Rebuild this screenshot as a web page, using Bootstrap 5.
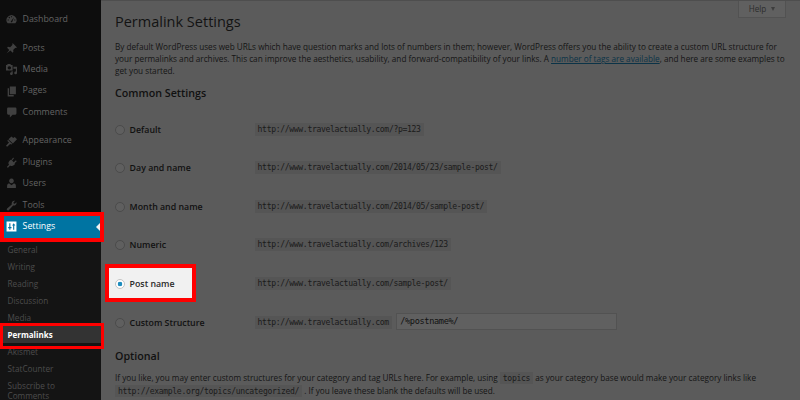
<!DOCTYPE html>
<html lang="en">
<head>
<meta charset="utf-8">
<title>Permalink Settings</title>
<link href="https://cdn.jsdelivr.net/npm/bootstrap@5.3.0/dist/css/bootstrap.min.css" rel="stylesheet">
<style>
body{width:800px;height:400px;overflow:hidden;background:#5b5b5b;color:#151515;font:8.2px/12.1px "Open Sans",sans-serif}
.side{width:101px;height:400px;background:#0d0d0d;padding-top:9px;flex:none;overflow:hidden}
.item{height:21.45px;padding-left:6px;gap:5.6px;color:#646464;font-size:8.8px;line-height:21.45px;white-space:nowrap;text-decoration:none}
.item svg{width:11px;height:11px;fill:#404040;flex:none}
.gap-sep{height:7.1px}
.item.on{background:#0074a2;color:#fff;position:relative}
.item.on svg{fill:#fff}
.item.on::after{content:"";position:absolute;right:0;top:5.7px;border:5px solid transparent;border-right-color:#f1f1f1;border-left:0}
.sub{background:#141414;height:164px;padding-top:3.6px}
.sub .sub-item{display:block;color:#4c4c4c;font-size:8.2px;line-height:17.05px;height:17.05px;padding-left:7.5px;text-decoration:none}
.sub .cur{background:#333;color:#fff;font-weight:700;font-size:8px}
.sub .two{line-height:9.8px;padding-top:3.6px}
.main{padding-left:14px;border-top:1px solid #4e4e4e;width:699px;height:400px}
h1{font-size:14.5px;line-height:20px;margin:11px 0 0;font-weight:400;color:#131313}
h2{font-size:10.7px;line-height:14px;margin:8.7px 0 0;font-weight:600;color:#111}
.intro{margin:9.2px 0 0;white-space:nowrap}
.intro a{color:#0b3347}
code{font:8.1px/11px "DejaVu Sans Mono",monospace;letter-spacing:-.345px;color:#1b1b1b;background:#555;padding:1px 3px}
.opts{padding-top:10.2px}
.opt{height:38.6px}
.opt code{margin-top:-1.2px}
.opt label{width:139.6px;font-size:8.8px;font-weight:600;color:#111;gap:4.6px}
.radio{width:10px;height:10px;border:1px solid #4b4b4b;border-radius:50%;background:#5f5f5f;flex:none}
.opt.sel label{position:relative;z-index:3;color:#2a2a2a}
.sel .radio{background:radial-gradient(circle,#1e8cbe 0 2px,#fff 2.6px);border-color:#c4c4c4}
.field{width:221px;height:17px;border:1px solid #525252;background:#606060;color:#111;font:8.6px/15px "DejaVu Sans Mono",monospace;letter-spacing:-.345px;padding:0 3px;margin:-2px 0 0 4.3px}
.h-opt{margin-top:7.3px}
.note{line-height:12.7px;margin-top:9px}
.help{position:absolute;left:738px;top:1px;width:48px;height:17px;background:#606060;border:1px solid #525252;border-top:0;color:#2d2d2d;font-size:8.2px;gap:5px}
.help i{border:2.7px solid transparent;border-top:4px solid #3d3d3d;border-bottom:0}
.frame{position:absolute;border:3.6px solid #f00;z-index:4;pointer-events:none}
.f1{left:0;top:212px;width:104px;height:30px;border-width:4px}
.f2{left:0;top:323px;width:104px;height:26px}
.f3{left:105px;top:263.6px;width:91px;height:38.6px;border-width:4px;background:#f1f1f1;z-index:2}
</style>
<script src="https://cdn.jsdelivr.net/npm/bootstrap@5.3.0/dist/js/bootstrap.bundle.min.js"></script>
</head>
<body class="position-relative">
<div class="d-flex">
<nav class="side">
<a class="item d-flex align-items-center"><svg viewBox="0 0 20 20"><path fill-rule="evenodd" d="M3 17a9 9 0 1 1 14 0zM9 4v2h2V4zM4.500 6.500l1.500 1.500 1.500-1.500L6 5zM3 10v2h2v-2zm12 0v2h2v-2zM8.500 14a1.800 1.800 0 0 0 3 0L14.500 6z"/></svg>Dashboard</a>
<div class="gap-sep"></div>
<a class="item d-flex align-items-center"><svg viewBox="0 0 20 20"><path d="M12 0l8 8-2 1-1-.5-4 4 .5 3.500-1.500 1.500-4-4L1 19l5-6.500L2 8.500 3.500 7l4 .5 4-4z"/></svg>Posts</a>
<a class="item d-flex align-items-center"><svg viewBox="0 0 20 20"><path fill-rule="evenodd" d="M0 2h2l1-2h5l1 2h3v10H0zm6 2a3 3 0 1 0 .1 0zM13.500 5H20v11a2.500 2.500 0 1 1-2-2.400V8.500h-4.500zM10 13h2.300v4.500a2.500 2.500 0 1 1-2.300-2.400z"/></svg>Media</a>
<a class="item d-flex align-items-center"><svg viewBox="0 0 20 20"><path d="M7 1h11v14H7zM3 4h2.500v12.500H14V19H3z"/></svg>Pages</a>
<a class="item d-flex align-items-center"><svg viewBox="0 0 20 20"><path d="M4 1h13a2 2 0 0 1 2 2v9a2 2 0 0 1-2 2h-5l-5 5v-5H4a2 2 0 0 1-2-2V3a2 2 0 0 1 2-2z"/></svg>Comments</a>
<div class="gap-sep"></div>
<a class="item d-flex align-items-center"><svg viewBox="0 0 20 20"><path d="M10 1l3 2.500L16 2l4 4-7.500 7.500-8-7.500zM3.500 7l8 7.500-2 1-2-1L2 19.500 0 17.500 5.500 12l-3-3z"/></svg>Appearance</a>
<a class="item d-flex align-items-center"><svg viewBox="0 0 20 20"><path d="M13 1l1.500 1.500-3.500 4 3 3 4-3.500 1.500 1.500-4 4 1 1-2 2c-2 2-5 3-7 1l-4 4-2-1.500 4-4c-2-2-1-5 1-7l2-2 1 1z"/></svg>Plugins</a>
<a class="item d-flex align-items-center"><svg viewBox="0 0 20 20"><path d="M10 1a4.300 4.300 0 1 1-.1 0zM2 18v-4c0-3 2-4 4-4l4 3 4-3c2 0 4 1 4 4v4z"/></svg>Users</a>
<a class="item d-flex align-items-center"><svg viewBox="0 0 20 20"><path d="M16.500 1.500l-3 3 .5 2 2 .5 3-3c1 4-2 7-6 6l-8 8.500c-2 2-5-1-3-3L10.500 8c-1-4 2-7.500 6-6.500z"/></svg>Tools</a>
<a class="item on d-flex align-items-center"><svg viewBox="0 0 20 20"><path fill-rule="evenodd" d="M1 1h18v18H1zM6 4v7H4v2h2v3h2v-3h2v-2H8V4zM13 16h2V8h2l-3-4-3 4h2z"/></svg>Settings</a>
<div class="sub">
<a class="sub-item">General</a><a class="sub-item">Writing</a><a class="sub-item">Reading</a><a class="sub-item">Discussion</a><a class="sub-item">Media</a><a class="sub-item cur">Permalinks</a><a class="sub-item">Akismet</a><a class="sub-item">StatCounter</a><a class="sub-item two">Subscribe to<br>Comments</a>
</div>
</nav>
<main class="main">
<h1>Permalink Settings</h1>
<p class="intro">By default WordPress uses web URLs which have question marks and lots of numbers in them; however, WordPress offers you the ability to create a custom URL structure for<br>your permalinks and archives. This can improve the aesthetics, usability, and forward-compatibility of your links. A <a href="#">number of tags are available</a>, and here are some examples to<br>get you started.</p>
<h2>Common Settings</h2>
<div class="opts">
<div class="opt d-flex align-items-center"><label class="d-flex align-items-center"><span class="radio"></span>Default</label><code>http://www.travelactually.com/?p=123</code></div>
<div class="opt d-flex align-items-center"><label class="d-flex align-items-center"><span class="radio"></span>Day and name</label><code>http://www.travelactually.com/2014/05/23/sample-post/</code></div>
<div class="opt d-flex align-items-center"><label class="d-flex align-items-center"><span class="radio"></span>Month and name</label><code>http://www.travelactually.com/2014/05/sample-post/</code></div>
<div class="opt d-flex align-items-center"><label class="d-flex align-items-center"><span class="radio"></span>Numeric</label><code>http://www.travelactually.com/archives/123</code></div>
<div class="opt sel d-flex align-items-center"><label class="d-flex align-items-center"><span class="radio"></span>Post name</label><code>http://www.travelactually.com/sample-post/</code></div>
<div class="opt d-flex align-items-center"><label class="d-flex align-items-center"><span class="radio"></span>Custom Structure</label><code>http://www.travelactually.com</code><div class="field">/%postname%/</div></div>
</div>
<h2 class="h-opt">Optional</h2>
<p class="intro note">If you like, you may enter custom structures for your category and tag URLs here. For example, using <code>topics</code> as your category base would make your category links like<br><code>http://example.org/topics/uncategorized/</code> . If you leave these blank the defaults will be used.</p>
</main>
</div>
<div class="help d-flex align-items-center justify-content-center">Help<i></i></div>
<div class="frame f1"></div><div class="frame f2"></div><div class="frame f3"></div>
</body>
</html>
